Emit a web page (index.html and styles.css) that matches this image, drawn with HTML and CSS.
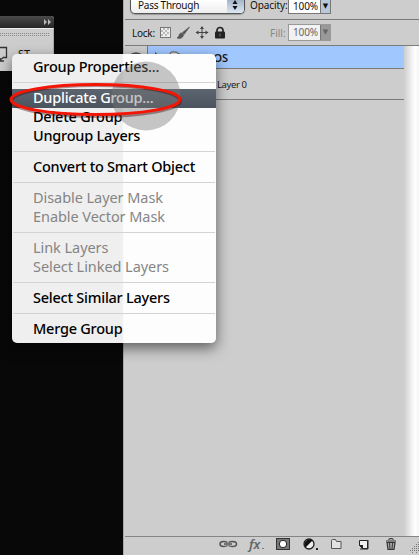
FILE: index.html
```html
<!DOCTYPE html>
<html lang="en">
<head>
<meta charset="utf-8">
<title>Layers panel</title>
<link rel="stylesheet" href="styles.css">
</head>
<body>
<main class="workspace">
  <aside class="dock">
    <div class="dock-head"><svg width="7" height="6" viewBox="0 0 7 6"><path d="M0 0l3 3-3 3zM4 0l3 3-3 3z" fill="#bbb"/></svg></div>
    <div class="dock-body">
      <div class="grip"></div>
      <div class="dock-row">
        <svg width="8" height="16" viewBox="0 0 8 16"><path d="M0 1.500H6.500V11.500H3M0 14l4-3M0 12v3h4" fill="none" stroke="#333" stroke-width="1.300"/></svg>
        <span>ST</span>
      </div>
    </div>
  </aside>

  <section class="panel">
    <div class="bar blend">
      <div class="select"><span>Pass Through</span><i class="stepper"><svg width="16" height="13" viewBox="0 0 16 13"><path d="M8 0l2.500 4h-5zM8 10l2.500-4h-5z" fill="#111"/></svg></i></div>
      <span class="label opacity">Opacity:</span>
      <div class="number"><span>100%</span><i>▼</i></div>
    </div>
    <div class="bar lock">
      <span class="label lock-label">Lock:</span>
      <svg class="lock-icons" width="66" height="14" viewBox="0 0 66 14">
        <rect x=".5" y="1.500" width="10" height="10" fill="#eee" stroke="#777"/>
        <path d="M3 2h2v2H3zM7 2h2v2H7zM1 4h2v2H1zM5 4h2v2H5zM3 6h2v2H3zM7 6h2v2H7zM1 8h2v2H1zM5 8h2v2H5z" fill="#bbb"/>
        <path d="M29.500 1l-7 5.500 1.500 2zM22 7c-2 0-3 1-3 3l-2 2c3 1 6 0 6.500-3z" fill="#555" stroke="#555" stroke-width=".7"/>
        <path d="M42 1v11M36.500 6.500h11" stroke="#444" stroke-width="1"/>
        <path d="M42 0l2 3h-4zM42 13l2-3h-4zM35.500 6.500l3-2v4zM48.500 6.500l-3-2v4z" fill="#444"/>
        <path d="M57 6V4.500a3 3 0 016 0V6" fill="none" stroke="#222" stroke-width="1.700"/>
        <rect x="55" y="5.500" width="10" height="7" rx="1" fill="#222"/><path d="M60 7.500v3" stroke="#777"/>
      </svg>
      <span class="label fill">Fill:</span>
      <div class="number off"><span>100%</span><i>▼</i></div>
    </div>
    <div class="list">
      <div class="layers">
        <div class="layer active">
          <div class="eye"><svg width="16" height="12" viewBox="0 0 16 12"><path d="M1 5Q8-1 15 5" fill="none" stroke="#555" stroke-width="1.300"/><circle cx="8" cy="5" r="3" fill="#555"/></svg></div>
          <svg class="folder" width="26" height="14" viewBox="0 0 26 14"><path d="M0 2l5 4-5 4z" fill="#555"/><path d="M15 12V4q0-2 2-2h4q2 0 2 2h2v8z" fill="#ddd" stroke="#555"/></svg>
          <span class="name group-name">LOGOS</span>
        </div>
        <div class="layer"><div class="eye"></div><span class="name layer-name">Layer 0</span></div>
      </div>
      <div class="scroll"></div>
    </div>
    <footer class="tools">
      <svg width="200" height="18" viewBox="0 0 200 18">
        <g fill="none" stroke="#555" stroke-width="1.500"><path d="M8.500 5.500Q7 4.500 4.500 4.500q-3.500 0-3.500 2.500t3.500 2.500q2.500 0 4-1"/><path d="M9.500 5.500Q11 4.500 13.500 4.500q4 0 4 2.500t-4 2.500q-2.500 0-4-1M5 7h8"/></g>
        <text x="30" y="12" class="fx">fx</text><path d="M43 11.500h2" stroke="#777"/>
        <rect x="57" y="1" width="14" height="12" fill="#333"/><rect x="58" y="2" width="12" height="10" fill="#777"/><circle cx="64" cy="7" r="3.700" fill="#fff" stroke="#222"/>
        <circle cx="90" cy="7" r="5" fill="#eee" stroke="#222" stroke-width="1.300"/><path d="M93.500 3.500a5 5 0 00-7 7z" fill="#111"/><path d="M97 11h2v2h-2z" fill="#222"/>
        <path d="M112.500 11.500v-8q0-1 1-1h3l1 2h4.500v7z" fill="#e2e2e2" stroke="#555"/>
        <path d="M140.500 3.500h8v8h-5l-3-3z" fill="#eee" stroke="#222"/><path d="M140 8h4v4z" fill="#222"/><path d="M149 3v9h-8" stroke="#222" fill="none"/>
        <path d="M167 4h10M169.500 2.500q2.500-2 5 0M168 5.500l1 7h6l1-7z" fill="#aaa" stroke="#333" stroke-width="1.200"/><path d="M170.500 6l.5 6M173.500 6l-.5 6" stroke="#333"/>
        <g fill="#777"><path d="M199 5h1v1h-1zM197 7h1v1h-1zM195 9h1v1h-1zM199 9h1v1h-1zM193 11h1v1h-1zM197 11h1v1h-1zM191 13h1v1h-1zM195 13h1v1h-1zM199 13h1v1h-1zM193 15h1v1h-1zM197 15h1v1h-1zM197 9h1v1h-1zM199 7h1v1h-1zM195 11h1v1h-1zM199 11h1v1h-1zM193 13h1v1h-1zM197 13h1v1h-1z"/></g>
      </svg>
    </footer>
  </section>

  <nav class="menu">
    <div class="item">Group Properties...</div>
    <hr>
    <div class="item chosen">Duplicate Group...</div>
    <div class="item">Delete Group</div>
    <div class="item">Ungroup Layers</div>
    <hr>
    <div class="item">Convert to Smart Object</div>
    <hr>
    <div class="item disabled">Disable Layer Mask</div>
    <div class="item disabled">Enable Vector Mask</div>
    <hr>
    <div class="item disabled">Link Layers</div>
    <div class="item disabled">Select Linked Layers</div>
    <hr>
    <div class="item">Select Similar Layers</div>
    <hr>
    <div class="item">Merge Group</div>
  </nav>
  <svg class="marks" width="190" height="80" viewBox="0 0 190 80">
    <circle cx="146" cy="41" r="34.500" fill="#777" fill-opacity=".42"/>
    <ellipse cx="96" cy="46" rx="84.500" ry="15.500" fill="none" stroke="#400" stroke-opacity=".4" stroke-width="3"/>
    <ellipse cx="95.500" cy="44.500" rx="84.500" ry="15" fill="none" stroke="#f51505" stroke-width="3"/>
  </svg>
</main>
</body>
</html>
```

FILE: styles.css
```css
* { box-sizing: border-box; }
body { margin: 0; background: #080808; font: 10px "Noto Sans", "Open Sans", sans-serif; color: #111; }
.workspace { position: relative; display: flex; width: 419px; height: 555px; overflow: hidden; background: #080808; }
.dock { width: 54px; height: 55px; margin: 16px 69px 0 0; background: #cdcdcd; border-radius: 0 3px 0 0; overflow: hidden; }
.dock-head { display: flex; align-items: center; justify-content: flex-end; height: 12px; padding-right: 3px; background: linear-gradient(#4a4a4a, #272727); }
.dock-body { padding-top: 4px; border-top: 1px solid #eee; border-right: 1px solid #aaa; height: 43px; }
.grip { width: 49px; height: 3px; background: repeating-linear-gradient(90deg, #888 0 1px, transparent 1px 2px); -webkit-mask: linear-gradient(#000 33%, transparent 33% 66%, #000 66%); mask: linear-gradient(#000 33%, transparent 33% 66%, #000 66%); }
.dock-row { display: flex; gap: 10px; padding-top: 10px; line-height: 16px; }
.dock-row span { font-size: 11px; }
.panel { display: flex; flex-direction: column; width: 296px; height: 555px; background: #cdcdcd; border-left: 1px solid #aaa; }
.bar { display: flex; align-items: center; margin-left: 1px; border-bottom: 1px solid #7d7a7a; flex: none; }
.blend { height: 20px; align-items: flex-start; padding-left: 5px; }
.select { display: flex; width: 115px; height: 14px; justify-content: space-between; border: 1px solid #555; border-top: 0; border-radius: 0 0 5px 5px; background: linear-gradient(#fff, #eee); overflow: hidden; box-shadow: 0 1px 1px #999; }
.select span { padding-left: 7px; line-height: 11px; letter-spacing: -.25px; }
.stepper { width: 17px; background: linear-gradient(#a5b5cb, #dce7f2); }
.stepper svg { display: block; }
.label { line-height: 12px; white-space: nowrap; }
.opacity { width: 36px; margin-left: 5px; line-height: 11px; letter-spacing: -.1px; }
.number { display: flex; width: 43px; height: 14px; background: #fff; border: 1px solid #777; border-top: 0; flex: none; }
.blend .number { margin-left: 2px; }
.number span { width: 31px; padding-left: 4px; line-height: 12px; letter-spacing: -.1px; }
.number i { flex: 1; font: 7px/12px "DejaVu Sans", sans-serif; text-align: center; background: #b9c7da; border-left: 1px solid #777; }
.number.off { height: 17px; color: #666; background: #f2f2f2; border: 1px solid #999; margin-left: 3px; }
.number.off span { line-height: 15px; }
.number.off i { line-height: 15px; background: #999; }
.lock { height: 26px; padding-left: 7px; }
.lock-label { width: 22px; letter-spacing: -.25px; }
.lock-icons { margin-left: 6px; }
.fill { width: 15px; margin-left: 44px; color: #888; }
.list { display: flex; flex: 1; margin-left: 1px; }
.layers { width: 279px; }
.layer { display: flex; align-items: center; height: 31px; border-bottom: 1px solid #7d7a7a; }
.layer.active { height: 23px; background: #a1c7ff; }
.eye { width: 23px; height: 100%; padding: 5px 3px; background: #cdcdcd; border-right: 1px solid #777; }
.folder { margin-left: 7px; }
.name { color: #1a1a1a; }
.group-name { margin-left: 10px; font-size: 11px; font-weight: 600; }
.layer-name { margin-left: 69px; font-size: 9.500px; letter-spacing: -.4px; }
.scroll { flex: 1; background: linear-gradient(90deg, #cdcdcd, #f1f1f1 50%, #fff 75%, #f4f4f4); }
.tools { height: 19px; flex: none; margin-left: 1px; padding-left: 94px; border-top: 1px solid #858585; }
.tools svg { display: block; }
.fx { font: italic 600 13px "Noto Sans", sans-serif; fill: #666; }
.menu { position: absolute; left: 12px; top: 54px; width: 204px; height: 289px; padding: 4px 0; border-radius: 5px; background: linear-gradient(90deg, #efefef 0 110px, #fdfdfd 112px); box-shadow: 0 5px 14px rgba(0, 0, 0, .55); }
.item { height: 19px; padding-left: 21px; font-size: 14.500px; line-height: 17px; letter-spacing: -.24px; font-weight: 500; color: #000; white-space: nowrap; }
.menu hr { height: 1px; margin: 5px 1px 6px; border: 0; background: #d2d3d5; }
.chosen { color: #fff; background: linear-gradient(#5c646f, #4b535e); }
.disabled { color: #858585; font-weight: 400; letter-spacing: -.06px; }
.marks { position: absolute; left: 0; top: 55px; }
```
